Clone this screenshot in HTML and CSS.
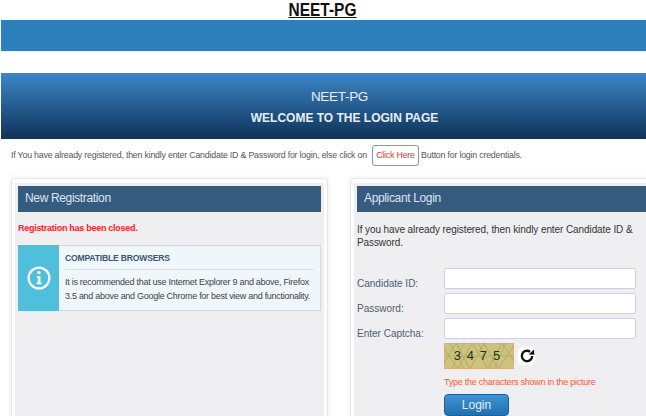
FILE: index.html
```html
<!DOCTYPE html>
<html lang="en">
<head>
    <meta charset="UTF-8">
    <title>NEET-PG</title>
    <link rel="stylesheet" href="styles.css">
</head>
<body>
    <div class="site-title"><span class="site-title-text">NEET-PG</span></div>
    <div class="top-bar"></div>
    <div class="welcome-banner">
        <p class="welcome-name">NEET-PG</p>
        <p class="welcome-text">WELCOME TO THE LOGIN PAGE</p>
    </div>
    <p class="intro-text">If You have already registered, then kindly enter Candidate ID &amp; Password for login, else click on <a class="click-here" href="#">Click Here</a> Button for login credentials.</p>
    <div class="panels">
        <div class="panel panel-left">
            <div class="panel-inner">
                <div class="panel-head">New Registration</div>
                <p class="closed-text">Registration has been closed.</p>
                <div class="info-box">
                    <div class="info-icon">
                        <svg width="24" height="28" viewBox="0 0 24 28">
                            <circle cx="12" cy="14" r="10.4" fill="none" stroke="#fff" stroke-width="2.2"/>
                            <circle cx="12" cy="8.6" r="1.7" fill="#fff"/>
                            <path d="M9.8 12h3.6v6.6h1.2v1.6h-5v-1.6h1.2v-5h-1z" fill="#fff"/>
                        </svg>
                    </div>
                    <div class="info-body">
                        <h4 class="info-title">COMPATIBLE BROWSERS</h4>
                        <p class="info-text">It is recommended that use Internet Explorer 9 and above, Firefox 3.5 and above and Google Chrome for best view and functionality.</p>
                    </div>
                </div>
            </div>
        </div>
        <div class="panel panel-right">
            <div class="panel-inner">
                <div class="panel-head">Applicant Login</div>
                <p class="login-intro">If you have already registered, then kindly enter Candidate ID &amp; Password.</p>
                <form class="login-form">
                    <label class="form-label" for="cid">Candidate ID:</label>
                    <input class="form-input" type="text" id="cid">
                    <label class="form-label" for="pwd">Password:</label>
                    <input class="form-input" type="password" id="pwd">
                    <label class="form-label" for="cap">Enter Captcha:</label>
                    <input class="form-input" type="text" id="cap">
                    <div class="captcha-cell">
                        <div class="captcha-row">
                            <div class="captcha-img">
                                <svg class="captcha-lines" width="70" height="26" viewBox="0 0 70 26">
                                    <path d="M0 20L12 0L26 26L40 0L54 26L70 2M0 6L14 26L28 0L44 26L58 0L70 18" fill="none" stroke="#d0935f" stroke-width=".8"/>
                                    <path d="M0 13H70M6 0L20 26M34 0L48 26M62 0L50 26M20 0L8 26" fill="none" stroke="#8fb46a" stroke-width=".6"/>
                                </svg>
                                <span class="captcha-code">3 4 7 5</span>
                            </div>
                            <div class="captcha-refresh">
                                <svg width="16" height="16" viewBox="0 0 16 16">
                                    <path d="M13.2 8A5.2 5.2 0 1 1 11 3.7" fill="none" stroke="#111" stroke-width="2.3"/>
                                    <path d="M9.6 6.6L15.4 6.8L15 1.6z" fill="#111"/>
                                </svg>
                            </div>
                        </div>
                        <p class="captcha-hint">Type the characters shown in the picture</p>
                        <button class="login-button" type="button">Login</button>
                    </div>
                </form>
            </div>
        </div>
    </div>
</body>
</html>
```
FILE: styles.css
```css
html, body {
    margin: 0;
    padding: 0;
    height: 100%;
    overflow: hidden;
    background-color: #fff;
    font-family: "Liberation Sans", Arial, sans-serif;
}

p {
    margin: 0;
}

.site-title {
    height: 20px;
    line-height: 20px;
    text-align: center;
    font-size: 18px;
    font-weight: bold;
    color: #111;
}

/* squeezed sideways, the original heading is tall and narrow */
.site-title-text {
    display: inline-block;
    text-decoration: underline;
    transform: scaleX(0.86);
}

.top-bar {
    height: 31px;
    margin-left: 1px;
    background-color: #2c80bb;
}

.welcome-banner {
    height: 66px;
    margin: 22px 0 0 1px;
    padding-left: 42px;
    box-sizing: border-box;
    background: linear-gradient(to bottom, #3b87c6, #0f3259);
    text-align: center;
    color: #e6eef6;
}

.welcome-name {
    padding-top: 15px;
    padding-right: 10px;
    line-height: 17px;
    font-size: 13.5px;
    letter-spacing: -0.3px;
}

.welcome-text {
    margin-top: 5px;
    line-height: 17px;
    font-size: 12px;
    font-weight: bold;
}

.intro-text {
    height: 21px;
    line-height: 21px;
    margin: 6px 0 0 11px;
    font-size: 8.8px;
    letter-spacing: -0.2px;
    color: #555;
    white-space: nowrap;
}

.click-here {
    display: inline-block;
    margin-left: 3px;
    padding: 0 3px;
    line-height: 19px;
    border: 1px solid #7d97b8;
    border-radius: 3px;
    color: #e2322f;
    text-decoration: none;
}

.panels {
    display: flex;
    gap: 22px;
    margin: 12px 0 0 11px;
}

.panel {
    width: 317px;
    height: 260px;
    flex-shrink: 0;
    box-sizing: border-box;
    padding: 4px 3px 0;
    border: 1px solid #e6e6e6;
    border-radius: 3px;
    box-shadow: 0 0 6px rgba(0, 0, 0, 0.08);
}

.panel-inner {
    height: 100%;
    padding: 3px 3px 0;
    background-color: #efeff1;
}

.panel-head {
    height: 26px;
    line-height: 25px;
    padding-left: 7px;
    background-color: #365b80;
    color: #dce6ef;
    font-size: 12px;
    letter-spacing: -0.35px;
}

.closed-text {
    margin-top: 11px;
    line-height: 11px;
    font-size: 9px;
    font-weight: bold;
    letter-spacing: -0.28px;
    color: #f5222d;
}

.info-box {
    display: flex;
    height: 66px;
    margin-top: 11px;
    box-sizing: border-box;
    border: 1px solid #d3d9e4;
    border-left: 0;
    background-color: #eff6fc;
}

.info-icon {
    display: flex;
    align-items: center;
    justify-content: center;
    width: 41px;
    margin-top: -1px;
    margin-bottom: -1px;
    background-color: #4fbfdc;
}

.info-body {
    flex: 1;
    padding: 0 6px 0 6px;
}

.info-title {
    margin: 0;
    height: 24px;
    line-height: 24px;
    box-sizing: border-box;
    border-bottom: 1px solid #d8dce6;
    font-size: 8.6px;
    font-weight: bold;
    letter-spacing: -0.2px;
    color: #3c5672;
}

.info-text {
    margin-top: 5px;
    line-height: 14px;
    font-size: 9px;
    letter-spacing: -0.28px;
    color: #444;
}

.login-intro {
    margin-top: 11px;
    line-height: 13px;
    font-size: 10px;
    letter-spacing: -0.09px;
    color: #333;
}

.login-form {
    display: grid;
    grid-template-columns: 87px 192px;
    row-gap: 4px;
    margin-top: 19px;
}

.form-label {
    align-self: end;
    margin-bottom: -1px;
    line-height: 13px;
    font-size: 10px;
    color: #4b5e73;
}

.form-input {
    height: 21px;
    padding: 0;
    box-sizing: border-box;
    border: 1px solid #ccd3e0;
    border-radius: 2px;
    background-color: #fff;
}

.captcha-cell {
    grid-column: 2;
}

.captcha-row {
    display: flex;
    align-items: center;
    gap: 4px;
}

.captcha-img {
    position: relative;
    width: 70px;
    height: 26px;
    box-sizing: border-box;
    padding-right: 3px;
    outline: 1px solid #e2ad7c;
    outline-offset: -1px;
    background-color: #c9c57c;
    text-align: center;
}

.captcha-lines {
    position: absolute;
    left: 0;
    top: 0;
}

.captcha-code {
    position: relative;
    line-height: 26px;
    font-size: 13px;
    letter-spacing: 1.1px;
    color: #2b2b20;
}

.captcha-refresh {
    display: flex;
    width: 17px;
    height: 18px;
    align-items: center;
    justify-content: center;
    background-color: #fff;
    border-radius: 5px;
}

.captcha-hint {
    margin-top: 8px;
    line-height: 11px;
    font-size: 9px;
    letter-spacing: -0.25px;
    color: #f0603a;
}

.login-button {
    display: block;
    width: 65px;
    height: 22px;
    margin-top: 6px;
    padding: 0;
    border: 1px solid #1d5f9a;
    border-radius: 4px;
    background: linear-gradient(to bottom, #3d94d4, #236fb0);
    color: #e4eef7;
    font-family: inherit;
    font-size: 12px;
}
```
